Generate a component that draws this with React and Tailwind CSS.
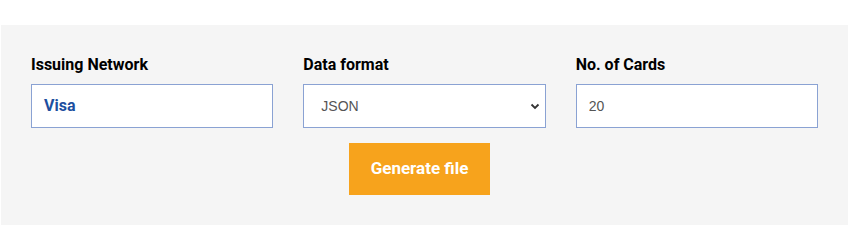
import { useState } from 'react'

export default function App() {
  const [format, setFormat] = useState('JSON')
  const [count, setCount] = useState('20')

  return (
    <div className="w-[848px] h-[243px] bg-white pt-[25px] pl-px font-['Roboto',sans-serif]">
      <div className="bg-[#f5f5f5] px-[30px] pt-[28px] pb-[30px]">
        <div className="grid grid-cols-3 gap-x-[30px]">
          <div>
            <label className="block text-base leading-6 font-bold text-black mb-[7px]">Issuing Network</label>
            <div className="h-[44px] border border-[#8aa2d3] bg-white flex items-center pl-3">
              <span className="text-base font-bold text-[#1d4f9f]">Visa</span>
            </div>
          </div>
          <div>
            <label className="block text-base leading-6 font-bold text-black mb-[7px]">Data format</label>
            <div className="relative h-[44px] border border-[#8aa2d3] bg-white">
              <select
                value={format}
                onChange={(e) => setFormat(e.target.value)}
                className="appearance-none w-full h-full bg-transparent pl-[17px] pr-8 text-sm text-[#555] font-['Liberation_Sans',Arial,sans-serif] outline-none"
              >
                <option>JSON</option>
                <option>CSV</option>
                <option>XML</option>
              </select>
              <svg className="absolute right-[5px] top-[18px] w-[10px] h-[7px] pointer-events-none" viewBox="0 0 10 7" fill="none">
                <path d="M1.5 1.5 5 5 8.5 1.5" stroke="#333" strokeWidth="1.8" />
              </svg>
            </div>
          </div>
          <div>
            <label className="block text-base leading-6 font-bold text-black mb-[7px]">No. of Cards</label>
            <input
              value={count}
              onChange={(e) => setCount(e.target.value)}
              className="block w-full h-[44px] border border-[#8aa2d3] bg-white pl-3 text-sm text-[#555] font-['Liberation_Sans',Arial,sans-serif] outline-none"
            />
          </div>
        </div>
        <div className="flex justify-center mt-[15px]">
          <button className="w-[141px] h-[52px] bg-[#f7a31c] text-white text-[17px] font-bold ml-[-10px]">
            Generate file
          </button>
        </div>
      </div>
    </div>
  )
}
